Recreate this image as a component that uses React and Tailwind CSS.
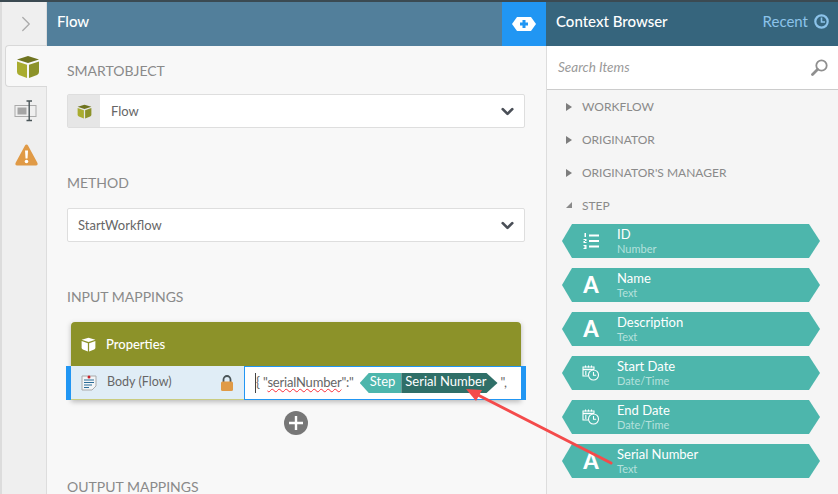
import { ChevronRight, ChevronDown } from "lucide-react";

const font = "font-['Lato','Noto_Sans',sans-serif]";

function Cube({ size = 24, top = "#6f7420", left = "#a9ac2f", right = "#8c9229" }) {
    return (
        <svg width={size} height={size} viewBox="0 0 24 24">
            <path d="M12 1 L23 4.5 L12 8 L1 4.5 Z" fill={top} />
            <path d="M1 6.5 L11 9.8 V23 L3 20 Q1 19 1 17 Z" fill={left} />
            <path d="M23 6.5 L13 9.8 V23 L21 20 Q23 19 23 17 Z" fill={right} />
        </svg>
    );
}

function ListIcon() {
    return (
        <svg width="16" height="16" viewBox="0 0 16 16" fill="white">
            <rect x="6" y="1.5" width="10" height="2" />
            <rect x="6" y="7" width="10" height="2" />
            <rect x="6" y="12.5" width="10" height="2" />
            <rect x="1.5" y="0" width="1.5" height="4" />
            <path d="M0.5 6 H3.5 V8 H2 V9 H3.5 V10 H0.5 V8 H2 V7 H0.5 Z" />
            <path d="M0.5 12 H3.5 V16 H0.5 V15 H2.2 V14.5 H1 V13.5 H2.2 V13 H0.5 Z" />
        </svg>
    );
}

function DateIcon() {
    return (
        <svg width="18" height="16" viewBox="0 0 18 16" fill="none" stroke="white" strokeWidth="1.1">
            <path d="M6 11 H1 V2 H12 V4.5" />
            <path d="M1 4.5 H12" strokeWidth="1.6" />
            <path d="M3.5 0.5 V2.5 M6.5 0.5 V2.5 M9.5 0.5 V2.5" />
            <path d="M3 7 H4.5 M3 9 H4.5" strokeWidth="1.4" />
            <circle cx="11.5" cy="10" r="5" fill="#4db6ac" />
            <path d="M11.5 7 V10.3 H14.2" />
        </svg>
    );
}

function Chip({ title, type, icon }) {
    return (
        <div className="flex h-[34px] w-[258px] items-center bg-[#4db6ac] [clip-path:polygon(10px_0,247px_0,100%_50%,247px_100%,10px_100%,0_50%)]">
            <div className="flex w-[55px] shrink-0 justify-center pl-[3px]">
                {icon === "text" && <span className="text-[22px] leading-none font-black text-white">A</span>}
                {icon === "list" && <ListIcon />}
                {icon === "date" && <DateIcon />}
            </div>
            <div className="flex flex-col">
                <span className="text-[13px] leading-[15px] text-white">{title}</span>
                <span className="text-[11px] leading-[14px] text-[#b5e1dc]">{type}</span>
            </div>
        </div>
    );
}

function Group({ label, open }) {
    return (
        <div className="flex h-[33px] items-center pl-[19px] text-[12px] text-[#8a8a8a]">
            {open ? (
                <svg width="6" height="7" viewBox="0 0 6 7" className="mr-[10px]"><path d="M6 0 V6 H0 Z" fill="#8a8a8a" /></svg>
            ) : (
                <svg width="6" height="8" viewBox="0 0 6 8" className="mr-[10px]"><path d="M0 0 L6 4 L0 8 Z" fill="#7d7d7d" /></svg>
            )}
            {label}
        </div>
    );
}

function SelectBox({ value, icon }) {
    return (
        <div className="flex h-[34px] w-[458px] items-center rounded-[2px] border border-[#dedede] bg-white">
            {icon && (
                <div className="flex h-full w-[32px] items-center justify-center bg-[#e6e6e6]">
                    <Cube size={15} />
                </div>
            )}
            <span className={`flex-1 pt-[2px] text-[13px] text-[#666] ${icon ? "pl-[11px]" : "pl-[10px]"}`}>{value}</span>
            <ChevronDown size={19} strokeWidth={3.4} className="mt-[1px] mr-[7px] text-[#4a4f57]" />
        </div>
    );
}

export default function App() {
    return (
        <div className={`relative flex h-[494px] w-[838px] flex-col overflow-hidden bg-[#f8f8f8] ${font}`}>
            <div className="h-[2px] shrink-0 bg-[#3b4a52]" />
            <div className="flex min-h-0 flex-1">
                {/* left rail */}
                <div className="flex w-[47px] shrink-0 flex-col border-r border-[#ddd] border-l-2 border-l-[#dcdcdc] bg-[#efefef]">
                    <div className="flex h-[43px] items-center justify-center pl-[4px]">
                        <ChevronRight size={26} strokeWidth={1.2} className="text-[#aaa]" />
                    </div>
                    <div className="-mr-px ml-[3px] flex h-[42px] items-center justify-center rounded-l-[4px] border border-r-0 border-[#d8d8d8] bg-[#f8f8f8] pt-[2px] pl-[2px]">
                        <Cube size={24} />
                    </div>
                    <div className="flex h-[48px] items-center justify-center pl-[4px]">
                        <svg width="24" height="22" viewBox="0 0 24 22" fill="none">
                            <rect x="1" y="5.5" width="21" height="11" stroke="#aaa" />
                            <rect x="3.5" y="7.5" width="9" height="7" fill="#a5a5a5" />
                            <path d="M12.5 1 H18 M15.2 1 V20.5 M12.5 20.5 H18" stroke="#4a5558" strokeWidth="1.4" />
                        </svg>
                    </div>
                    <div className="mt-[6px] flex h-[28px] items-center justify-center pl-[4px]">
                        <svg width="23" height="22" viewBox="0 0 23 22">
                            <path d="M11.5 0.5 Q12.5 0.5 13 1.5 L22.5 19 Q23 21.5 21 21.5 H2 Q0 21.5 0.5 19 L10 1.5 Q10.5 0.5 11.5 0.5 Z" fill="#e09a46" />
                            <path d="M10 6.5 H13 L12.5 14.5 H10.5 Z" fill="white" />
                            <circle cx="11.5" cy="17.5" r="1.8" fill="white" />
                        </svg>
                    </div>
                </div>

                {/* main column */}
                <div className="flex w-[499px] shrink-0 flex-col">
                    <div className="flex h-[44px] shrink-0">
                        <div className="flex flex-1 items-center bg-[#527f9b] pb-[5px] pl-[10px] text-[15px] font-medium text-white">Flow</div>
                        <div className="flex w-[44px] items-center justify-center bg-[#2196f3]">
                            <svg width="24" height="14" viewBox="0 0 24 14">
                                <path d="M5 0 H19 L24 7 L19 14 H5 L0 7 Z" fill="white" />
                                <path d="M10.5 3 H13.5 V5.5 H16 V8.5 H13.5 V11 H10.5 V8.5 H8 V5.5 H10.5 Z" fill="#2196f3" />
                            </svg>
                        </div>
                    </div>
                    <div className="flex flex-col pl-[20px] text-[14px] text-[#8a8a8a]">
                        <div className="mt-[15px] h-[20px] leading-[20px]">SMARTOBJECT</div>
                        <div className="mt-[13px]"><SelectBox value="Flow" icon /></div>
                        <div className="mt-[45px] h-[20px] leading-[20px]">METHOD</div>
                        <div className="mt-[15px]"><SelectBox value="StartWorkflow" /></div>
                        <div className="mt-[45px] h-[20px] leading-[20px]">INPUT MAPPINGS</div>

                        <div className="mt-[15px] ml-[4px] w-[450px] shadow-[0_2px_5px_rgba(0,0,0,0.25)]">
                            <div className="flex h-[44px] items-center rounded-t-[4px] bg-[#8c9229] pl-[10px] text-[13px] font-medium text-white">
                                <Cube size={15} top="white" left="white" right="white" />
                                <span className="ml-[10px] pt-[2px]">Properties</span>
                            </div>
                            <div className="relative flex h-[34px]">
                                <div className="absolute top-0 -left-[5px] h-full w-[5px] bg-[#2196f3]" />
                                <div className="absolute top-0 -right-[5px] h-full w-[5px] bg-[#2196f3]" />
                                <div className="flex w-[173px] items-center border-b border-[#c9cc80] bg-[#e0edf6] pl-[10px] text-[12.5px] text-[#666]">
                                    <svg width="16" height="16" viewBox="0 0 16 16" fill="none">
                                        <path d="M1 1 H15 V11 L11 15 H1 Z" stroke="#aaa" fill="#f2f5f7" />
                                        <path d="M3 5 H13 M3 7.5 H13 M3 10 H11 M3 12.5 H8" stroke="#2b6c97" />
                                        <circle cx="8" cy="2" r="1.5" fill="#c8232c" />
                                    </svg>
                                    <span className="ml-[10px] flex-1">Body (Flow)</span>
                                    <svg width="12" height="16" viewBox="0 0 12 16" className="mr-[11px]">
                                        <path d="M2.5 7 V4.5 A3.5 3.5 0 0 1 9.5 4.5 V7" fill="none" stroke="#4a5558" strokeWidth="1.8" />
                                        <rect y="6.5" width="12" height="9.5" rx="1.5" fill="#e09a46" />
                                    </svg>
                                </div>
                                <div className="flex flex-1 items-center overflow-hidden border-y border-l border-[#2196f3] bg-white pl-[10px] text-[13px] whitespace-nowrap text-[#666]">
                                    <span className="border-l border-[#444]">{"{"}</span>
                                    <span className="ml-[3px] tracking-[-0.2px]">"<span className="underline decoration-red-500 decoration-wavy decoration-1">serialNumber</span>":"</span>
                                    <div className="ml-[6px] flex h-[20px] items-center bg-[#4db6ac] pr-[6px] pb-[2px] pl-[10px] text-white [clip-path:polygon(9px_0,100%_0,100%_100%,9px_100%,0_50%)]">Step</div>
                                    <div className="flex h-[20px] items-center bg-[#2f6f68] pr-[11px] pb-[2px] pl-[4px] text-white [clip-path:polygon(0_0,calc(100%-11px)_0,100%_50%,calc(100%-11px)_100%,0_100%)]">Serial Number</div>
                                    <span className="ml-[3px]">",</span>
                                </div>
                            </div>
                        </div>

                        <div className="mt-[11px] ml-[217px] flex h-[24px] w-[24px] items-center justify-center rounded-full bg-[#777]">
                            <svg width="16" height="16" viewBox="0 0 16 16"><path d="M8 1 V15 M1 8 H15" stroke="white" strokeWidth="2.4" /></svg>
                        </div>
                        <div className="mt-[42px] h-[20px] leading-[20px]">OUTPUT MAPPINGS</div>
                    </div>
                </div>

                {/* context browser */}
                <div className="flex w-[292px] shrink-0 flex-col border-l border-[#ddd] bg-[#f5f5f5]">
                    <div className="-ml-px flex h-[44px] shrink-0 items-center justify-between bg-[#36657d] pr-[9px] pb-[5px] pl-[10px]">
                        <span className="text-[15px] font-medium text-white">Context Browser</span>
                        <div className="flex items-center gap-[6px] text-[15px] text-[#8cc3ea]">
                            Recent
                            <svg width="15" height="15" viewBox="0 0 15 15" fill="none" stroke="#8cc3ea">
                                <circle cx="7.5" cy="7.5" r="6.2" strokeWidth="2.2" />
                                <path d="M7.5 3.5 V8 H11" strokeWidth="1.6" />
                            </svg>
                        </div>
                    </div>
                    <div className="flex h-[44px] shrink-0 items-center justify-between border-b border-[#ccc] bg-white pr-[10px] pl-[11px]">
                        <span className="text-[13.5px] text-[#9a9a9a] italic">Search Items</span>
                        <svg width="17" height="17" viewBox="0 0 17 17" fill="none" stroke="#8f8f8f">
                            <circle cx="10.5" cy="6.5" r="5.2" strokeWidth="1.8" />
                            <path d="M6.5 10.5 L1.5 15.5" strokeWidth="2.8" strokeLinecap="round" />
                        </svg>
                    </div>
                    <Group label="WORKFLOW" />
                    <Group label="ORIGINATOR" />
                    <Group label="ORIGINATOR'S MANAGER" />
                    <Group label="STEP" open />
                    <div className="mt-[2px] flex flex-col gap-[10px] pl-[15px]">
                        <Chip title="ID" type="Number" icon="list" />
                        <Chip title="Name" type="Text" icon="text" />
                        <Chip title="Description" type="Text" icon="text" />
                        <Chip title="Start Date" type="Date/Time" icon="date" />
                        <Chip title="End Date" type="Date/Time" icon="date" />
                        <Chip title="Serial Number" type="Text" icon="text" />
                    </div>
                </div>
            </div>

            {/* annotation arrow over the page */}
            <svg className="pointer-events-none absolute top-0 left-0" width="838" height="494" viewBox="0 0 838 494">
                <path d="M611 463 L478 395" stroke="#f44b4b" strokeWidth="3" strokeLinecap="round" />
                <path d="M466 389 L482 390 L476 401 Z" fill="#f44b4b" />
            </svg>
        </div>
    );
}
